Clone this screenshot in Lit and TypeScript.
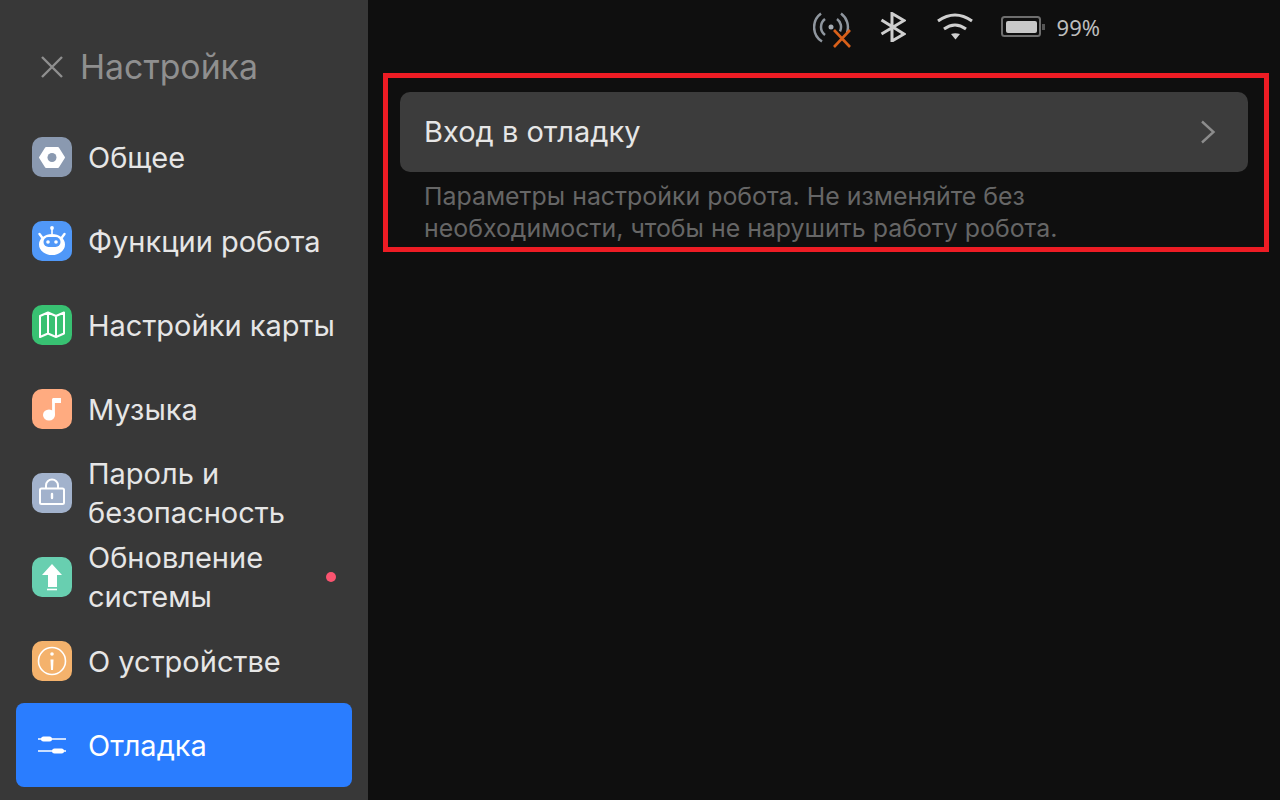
import { LitElement, html, css, svg } from "lit";
import { customElement } from "lit/decorators.js";

const icons: Record<string, unknown> = {
  nut: svg`<path d="M14 11h12l6 9.500-6 9.500H14L8 20.500z" fill="#fff" stroke="#fff" stroke-width="2" stroke-linejoin="round"/><circle cx="20" cy="20.500" r="4.500" fill="#8a99b0"/>`,
  robot: svg`<circle cx="20" cy="7" r="1.900" fill="#fff"/><path d="M20 7v6" stroke="#fff" stroke-width="1.600"/><path d="M7.500 13l3 4M32.500 13l-3 4" stroke="#fff" stroke-width="2.400" stroke-linecap="round"/><ellipse cx="20" cy="23.500" rx="13" ry="10.500" fill="#fff"/><rect x="11.500" y="16" width="17" height="10" rx="5" fill="#5098f8"/><circle cx="16" cy="21" r="1.800" fill="#fff"/><circle cx="24" cy="21" r="1.800" fill="#fff"/>`,
  map: svg`<path d="M8 11l8-3.500 8 3.500 8-3.500v21l-8 3.500-8-3.500-8 3.500zM16 8v20.500M24 11v21" fill="none" stroke="#fff" stroke-width="2" stroke-linejoin="round"/>`,
  note: svg`<ellipse cx="17" cy="26" rx="6" ry="5.500" fill="#fff"/><path d="M21.500 26V10" stroke="#fff" stroke-width="2.800"/><path d="M20.500 9h8.500v5h-8.500z" fill="#fff"/>`,
  lock: svg`<rect x="8" y="15.500" width="24" height="15.500" rx="1.500" fill="none" stroke="#fff" stroke-width="2"/><path d="M14 15.500v-3a6 6 0 0 1 12 0v3" fill="none" stroke="#fff" stroke-width="2"/><path d="M20 21v4" stroke="#fff" stroke-width="2.400" stroke-linecap="round"/>`,
  up: svg`<path d="M20 7l10 11h-5v12h-9V18h-6z" fill="#fff"/><path d="M15 32.500h10" stroke="#fff" stroke-width="1.600"/>`,
  info: svg`<circle cx="20" cy="20" r="13.500" fill="none" stroke="#fff" stroke-width="1.600"/><circle cx="20" cy="13" r="1.800" fill="#fff"/><path d="M18.500 18.500h3l-.5 10.500h-2z" fill="#fff"/>`,
  sliders: svg`<path d="M6 14h28M6 26h28" stroke="#fff" stroke-width="1.600"/><rect x="9" y="11.500" width="11" height="5" rx="2.500" fill="#fff"/><rect x="20" y="23.500" width="12" height="5" rx="2.500" fill="#fff"/>`,
};

const items = [
  { label: "Общее", icon: "nut", color: "#8a99b0" },
  { label: "Функции робота", icon: "robot", color: "#5098f8" },
  { label: "Настройки карты", icon: "map", color: "#38c172" },
  { label: "Музыка", icon: "note", color: "#ffab80" },
  { label: "Пароль и безопасность", icon: "lock", color: "#a2b2cc" },
  { label: "Обновление системы", icon: "up", color: "#68cfb0", dot: true },
  { label: "О устройстве", icon: "info", color: "#f4b26c" },
  { label: "Отладка", icon: "sliders", color: "transparent", active: true },
];

@customElement("app-root")
export class AppRoot extends LitElement {
  static styles = css`
    :host {
      display: block;
      width: 1280px;
      height: 800px;
      position: relative;
      overflow: hidden;
      font-family: "Inter", "Noto Sans", sans-serif;
      background: #0f0f0f;
    }
    .page { display: flex; height: 800px; }
    .side {
      width: 368px;
      flex: none;
      background: #383838;
      box-sizing: border-box;
      padding: 0 16px;
      display: flex;
      flex-direction: column;
    }
    .title {
      height: 115px;
      box-sizing: border-box;
      padding: 44px 0 0 24px;
      display: flex;
      align-items: flex-start;
      gap: 16px;
      color: #8f8f8f;
      font-size: 33.800px;
      line-height: 46px;
    }
    .title svg { width: 24px; height: 24px; margin-top: 11px; flex: none; }
    .item {
      height: 84px;
      flex: none;
      border-radius: 8px;
      box-sizing: border-box;
      padding: 0 16px;
      display: flex;
      align-items: center;
      gap: 16px;
      color: #e6e6e6;
      font-size: 29px;
      line-height: 39px;
    }
    .item.active { background: #2a7dff; color: #fff; }
    .badge { width: 40px; height: 40px; border-radius: 10px; flex: none; }
    .badge svg { display: block; width: 40px; height: 40px; }
    .label { flex: 1; min-width: 0; }
    .dot { width: 10px; height: 10px; border-radius: 50%; background: #fb5470; flex: none; }
    .main { flex: 1; min-width: 0; display: flex; flex-direction: column; }
    .status {
      height: 92px;
      box-sizing: border-box;
      padding: 10px 180px 0 0;
      display: flex;
      justify-content: flex-end;
      align-items: flex-start;
      color: #bdbdbd;
      font-family: "Noto Sans", sans-serif;
      font-size: 22px;
      line-height: 34px;
    }
    .status svg { display: block; flex: none; }
    .s-signal { margin-right: 27px; }
    .s-bt { margin: 2px 30px 0 0; }
    .s-wifi { margin: 2px 27px 0 0; }
    .s-batt { margin: 5px 12px 0 0; }
    .content { padding: 0 32px; }
    .row {
      height: 80px;
      background: #3c3c3c;
      border-radius: 10px;
      box-sizing: border-box;
      padding: 0 32px 0 24px;
      display: flex;
      align-items: center;
      justify-content: space-between;
      color: #e6e6e6;
      font-size: 29px;
    }
    .row span { padding-bottom: 2px; }
    .hint {
      margin: 8px 0 0;
      padding: 0 24px;
      max-width: 660px;
      color: #666666;
      font-size: 24.900px;
      line-height: 32px;
    }
    .frame {
      position: absolute;
      left: 383px;
      top: 73px;
      width: 886px;
      height: 179px;
      box-sizing: border-box;
      border: 5px solid #ed1c24;
      pointer-events: none;
    }
  `;

  render() {
    return html`<div class="page">
        <aside class="side">
          <div class="title">
            <svg viewBox="0 0 24 24"><path d="M2 2l20 20M22 2L2 22" stroke="#8f8f8f" stroke-width="2.400" fill="none"/></svg>
            <span>Настройка</span>
          </div>
          ${items.map(
            (i) => html`<div class="item ${i.active ? "active" : ""}">
              <div class="badge" style="background:${i.color}">
                <svg viewBox="0 0 40 40">${icons[i.icon]}</svg>
              </div>
              <span class="label">${i.label}</span>
              ${i.dot ? html`<span class="dot"></span>` : ""}
            </div>`
          )}
        </aside>
        <main class="main">
          <div class="status">
            <svg class="s-signal" width="40" height="40" viewBox="0 0 40 40">
              <circle cx="18" cy="17" r="2.500" fill="#a8adb3"/>
              <path d="M12 9A10 10 0 0 0 12 25M24 9A10 10 0 0 1 27 21.400M8 3.500A17 17 0 0 0 9 31.500M28 3.500A17 17 0 0 1 34 22.700" fill="none" stroke="#8f969e" stroke-width="2.500"/>
              <path d="M21 20l16 17M37 20L21 37" stroke="#d9601a" stroke-width="2.600"/>
            </svg>
            <svg class="s-bt" width="26" height="30" viewBox="0 0 26 30">
              <path d="M1.500 8L24 22 12 29V1.500L24 8.500 1.500 22" fill="none" stroke="#cfcfcf" stroke-width="3"/>
            </svg>
            <svg class="s-wifi" width="38" height="30" viewBox="0 0 38 30">
              <path d="M2 9Q19-3 36 9M8 17Q19 9 30 17" fill="none" stroke="#cfcfcf" stroke-width="3"/>
              <path d="M15 22Q19 20.500 24 22L19.500 27.500z" fill="#cfcfcf"/>
            </svg>
            <svg class="s-batt" width="44" height="24" viewBox="0 0 44 24">
              <rect x="1" y="2" width="38" height="19" rx="2.500" fill="none" stroke="#6e6e6e" stroke-width="2"/>
              <rect x="5" y="6" width="31" height="12" rx="2" fill="#c8c8c8"/>
              <rect x="41" y="9" width="3" height="6" fill="#555555"/>
            </svg>
            <span>99%</span>
          </div>
          <div class="content">
            <div class="row">
              <span>Вход в отладку</span>
              <svg width="16" height="24" viewBox="0 0 16 24"><path d="M2 1.500L13.500 12 2 22.500" fill="none" stroke="#8c8c8c" stroke-width="2.400"/></svg>
            </div>
            <p class="hint">Параметры настройки робота. Не изменяйте без необходимости, чтобы не нарушить работу робота.</p>
          </div>
        </main>
      </div>
      <div class="frame"></div>`;
  }
}
